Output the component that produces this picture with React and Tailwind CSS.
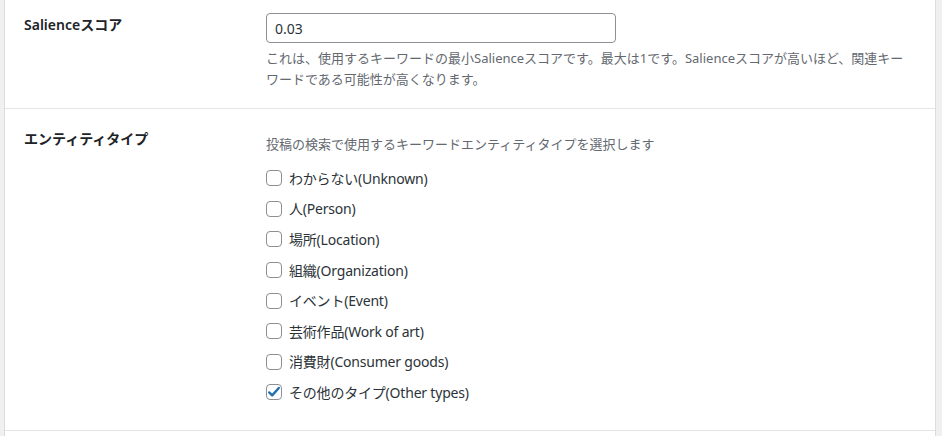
import React from 'react';

const entityTypes = [
  { label: 'わからない(Unknown)', checked: false },
  { label: '人(Person)', checked: false },
  { label: '場所(Location)', checked: false },
  { label: '組織(Organization)', checked: false },
  { label: 'イベント(Event)', checked: false },
  { label: '芸術作品(Work of art)', checked: false },
  { label: '消費財(Consumer goods)', checked: false },
  { label: 'その他のタイプ(Other types)', checked: true },
];

const Checkbox = ({ checked }) => (
  <span className="w-4 h-4 shrink-0 rounded-[4px] border border-[#8c8f94] bg-white flex items-center justify-center">
    {checked && (
      <svg width="14" height="14" viewBox="0 0 14 14" className="text-[#2271b1]">
        <path d="M2.2 7.4l3 3L11.8 3" fill="none" stroke="currentColor" strokeWidth="2.4" strokeLinecap="round" strokeLinejoin="round" />
      </svg>
    )}
  </span>
);

const App = () => {
  return (
    <div
      className="w-[942px] h-[436px] overflow-hidden bg-[#f0f0f1] flex"
      style={{ fontFamily: '"Noto Sans", "Noto Sans CJK JP", sans-serif' }}
    >
      <div className="ml-[4px] w-[932px] bg-white border-x border-[#dcdcde] flex flex-col">
        {/* Salience score */}
        <div className="flex border-b border-[#e5e5e5] pl-[19px] h-[109px]">
          <div className="w-[242px] pt-[14px] text-[14px] font-semibold text-[#1d2327]">Salienceスコア</div>
          <div className="pt-[13px] w-[650px]">
            <div className="w-[350px] h-[30px] rounded-[4px] border border-[#8c8f94] px-2 flex items-center text-[14px] text-[#2c3338]">
              0.03
            </div>
            <p className="mt-[5px] text-[13px] leading-[21px] text-[#646970]">
              これは、使用するキーワードの最小Salienceスコアです。最大は1です。Salienceスコアが高いほど、関連キーワードである可能性が高くなります。
            </p>
          </div>
        </div>

        {/* Entity types */}
        <div className="flex border-b border-[#e5e5e5] pl-[19px] h-[322px]">
          <div className="w-[242px] pt-[19px] text-[14px] font-semibold text-[#1d2327]">エンティティタイプ</div>
          <div className="pt-[25px]">
            <p className="text-[13px] leading-[21px] text-[#646970]">投稿の検索で使用するキーワードエンティティタイプを選択します</p>
            <div className="mt-[8px] flex flex-col">
              {entityTypes.map((t) => (
                <label key={t.label} className="h-[30.6px] flex items-center gap-[7px] text-[14px] tracking-[-0.2px] text-[#2c3338]">
                  <Checkbox checked={t.checked} />
                  <span>{t.label}</span>
                </label>
              ))}
            </div>
          </div>
        </div>
      </div>
    </div>
  );
};

export default App;
